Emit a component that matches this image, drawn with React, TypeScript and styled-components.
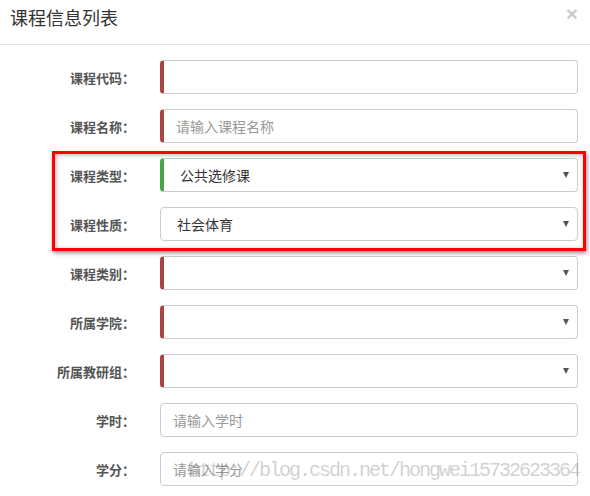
import React from "react";
import styled, { createGlobalStyle } from "styled-components";

const GlobalStyle = createGlobalStyle`
  html, body {
    margin: 0;
    padding: 0;
    background: #fff;
  }
  body {
    font-family: "Noto Sans CJK SC", "Liberation Sans", sans-serif;
    color: #333;
  }
`;

type Mark = "error" | "success" | "none";

interface Field {
  label: string;
  kind: "input" | "select";
  mark: Mark;
  value?: string;
  placeholder?: string;
}

const fields: Field[] = [
  { label: "课程代码：", kind: "input", mark: "error" },
  { label: "课程名称：", kind: "input", mark: "error", placeholder: "请输入课程名称" },
  { label: "课程类型：", kind: "select", mark: "success", value: "公共选修课" },
  { label: "课程性质：", kind: "select", mark: "none", value: "社会体育" },
  { label: "课程类别：", kind: "select", mark: "error" },
  { label: "所属学院：", kind: "select", mark: "error" },
  { label: "所属教研组：", kind: "select", mark: "error" },
  { label: "学时：", kind: "input", mark: "none", placeholder: "请输入学时" },
  { label: "学分：", kind: "input", mark: "none", placeholder: "请输入学分" },
];

const App: React.FC = () => {
  return (
    <Page>
      <GlobalStyle />
      <Header>
        <Title>课程信息列表</Title>
        <Close>×</Close>
      </Header>
      <Form>
        {fields.map((f) => (
          <Row key={f.label}>
            <Label>{f.label}</Label>
            <Control mark={f.mark} $select={f.kind === "select"}>
              {f.value ? (
                <Value>{f.value}</Value>
              ) : (
                <Placeholder>{f.placeholder || ""}</Placeholder>
              )}
              {f.kind === "select" && <Caret />}
            </Control>
          </Row>
        ))}
      </Form>
      <Highlight />
      <Watermark>http://blog.csdn.net/hongwei15732623364</Watermark>
    </Page>
  );
};

const Page = styled.div`
  position: relative;
  width: 590px;
  height: 496px;
  overflow: hidden;
`;

const Header = styled.div`
  display: flex;
  justify-content: space-between;
  align-items: flex-start;
  box-sizing: border-box;
  height: 45px;
  padding: 4px 12px 0 10px;
  border-bottom: 1px solid #e5e5e5;
`;

const Title = styled.h4`
  margin: 0;
  font-size: 18px;
  font-weight: 400;
  line-height: 26px;
  color: #333;
`;

const Close = styled.span`
  font-family: "Liberation Sans", sans-serif;
  font-size: 21px;
  font-weight: 700;
  line-height: 20px;
  color: #000;
  opacity: 0.2;
`;

const Form = styled.div`
  display: flex;
  flex-direction: column;
  gap: 15px;
  padding: 15px 12px 0 0;
`;

const Row = styled.div`
  display: grid;
  grid-template-columns: 135px 1fr;
  column-gap: 25px;
  align-items: center;
`;

const Label = styled.label`
  text-align: right;
  font-size: 13px;
  font-weight: 700;
  color: #555;
  white-space: nowrap;
`;

const markColor: Record<Mark, string> = {
  error: "#a94442",
  success: "#47a447",
  none: "#ccc",
};

const Control = styled.div<{ mark: Mark; $select: boolean }>`
  display: flex;
  align-items: center;
  justify-content: space-between;
  box-sizing: border-box;
  height: 34px;
  border: 1px solid #ccc;
  border-left: ${(p) => (p.mark === "none" ? "1px" : "4px")} solid
    ${(p) => markColor[p.mark]};
  border-radius: 4px;
  padding: 0 8px 0 ${(p) => (p.$select ? "16px" : "12px")};
  font-size: 14px;
  background: #fff;
`;

const Value = styled.span`
  color: #333;
`;

const Placeholder = styled.span`
  color: #999;
`;

const Caret = styled.span`
  width: 0;
  height: 0;
  border-left: 3.5px solid transparent;
  border-right: 3.5px solid transparent;
  border-top: 6px solid #555;
`;

const Highlight = styled.div`
  position: absolute;
  left: 52px;
  top: 151px;
  width: 534px;
  height: 100px;
  box-sizing: border-box;
  border: 3px solid #ff0000;
  box-shadow: 1px 2px 4px rgba(0, 0, 0, 0.45), inset 1px 1px 4px rgba(0, 0, 0, 0.3);
  pointer-events: none;
`;

const Watermark = styled.div`
  position: absolute;
  left: 189px;
  top: 459px;
  font-family: "Liberation Mono", "DejaVu Sans Mono", monospace;
  font-size: 20px;
  letter-spacing: -2px;
  line-height: 24px;
  color: rgba(120, 120, 120, 0.35);
  white-space: nowrap;
  pointer-events: none;
`;

export default App;
